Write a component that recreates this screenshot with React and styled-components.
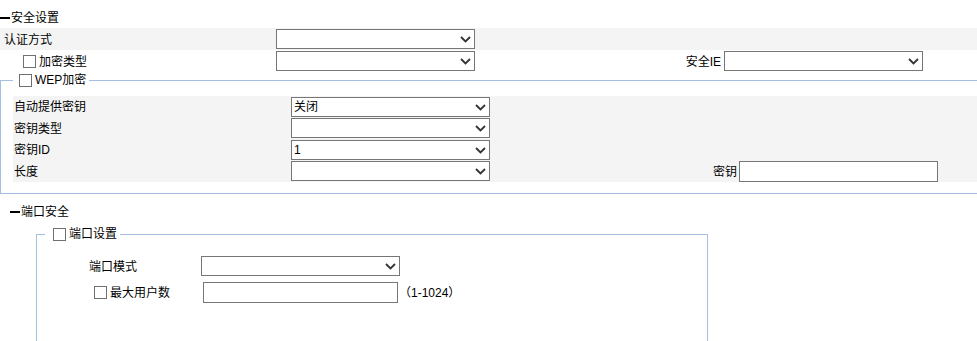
import React from "react";
import styled, { createGlobalStyle } from "styled-components";

const GlobalStyle = createGlobalStyle`
    html, body {
        margin: 0;
        padding: 0;
        background: #ffffff;
        overflow: hidden;
    }
    body {
        font-family: "Liberation Sans", "Noto Sans CJK SC", sans-serif;
        font-size: 12px;
        color: #000000;
    }
`;

const Page = styled.div`
    width: 977px;
    padding-top: 6px;
`;

const SectionTitle = styled.div`
    display: flex;
    align-items: center;
    height: 22px;
    padding-top: 1px;
    box-sizing: border-box;
    padding-left: ${(p) => p.$indent || 0}px;
    margin-top: ${(p) => p.$top || 0}px;
    line-height: 14px;
`;

const Dash = styled.span`
    display: inline-block;
    width: 10px;
    height: 2px;
    background: #000000;
    margin-right: 1px;
`;

const FormRow = styled.div`
    display: flex;
    align-items: center;
    height: ${(p) => p.$height || 22}px;
    background: ${(p) => (p.$shade ? "#f4f4f4" : "transparent")};
    line-height: 14px;
`;

const LabelCell = styled.div`
    display: flex;
    align-items: center;
    box-sizing: border-box;
    width: ${(p) => p.$width}px;
    padding-left: ${(p) => p.$pad || 0}px;
    padding-right: ${(p) => p.$padRight || 0}px;
    padding-top: 1px;
    justify-content: ${(p) => (p.$right ? "flex-end" : "flex-start")};
    white-space: nowrap;
`;

const Check = styled.input.attrs({ type: "checkbox" })`
    appearance: none;
    box-sizing: border-box;
    width: 13px;
    height: 13px;
    margin: 0 3px 0 0;
    border: 1px solid #707070;
    background: #ffffff;
`;

const SelectBox = styled.div`
    position: relative;
    width: ${(p) => p.$width || 199}px;
    height: 20px;
`;

const Select = styled.select`
    appearance: none;
    box-sizing: border-box;
    width: 100%;
    height: 100%;
    margin: 0;
    padding: 0 2px;
    border: 1px solid #767676;
    border-radius: 0;
    background: #ffffff;
    font-family: "Liberation Sans", "Noto Sans CJK SC", sans-serif;
    font-size: 12px;
    color: #000000;
    outline: none;
`;

const Chevron = styled.svg`
    position: absolute;
    right: 4px;
    top: 7px;
    width: 11px;
    height: 7px;
    pointer-events: none;
`;

const TextBox = styled.input.attrs({ type: "text" })`
    box-sizing: border-box;
    width: ${(p) => p.$width || 199}px;
    height: 21px;
    margin: 0;
    padding: 0 2px;
    border: 1px solid #767676;
    border-radius: 0;
    background: #ffffff;
    font-size: 12px;
    outline: none;
`;

const Group = styled.fieldset`
    box-sizing: border-box;
    margin: ${(p) => p.$margin || "0"};
    width: ${(p) => p.$width || "auto"};
    padding: ${(p) => p.$padding};
    border: 1px solid #a5bfe3;
    border-right: ${(p) => (p.$openRight ? "none" : "1px solid #a5bfe3")};
    min-width: 0;
`;

const Legend = styled.legend`
    display: flex;
    align-items: center;
    height: 14px;
    padding: 0 3px 0 ${(p) => p.$pad || 6}px;
    line-height: 14px;
`;

const Panel = styled.div`
    background: #f4f4f4;
`;

const Stack = styled.div`
    display: flex;
    flex-direction: column;
    gap: 4px;
`;

const Hint = styled.span`
    margin-left: 1px;
    padding-top: 1px;
    white-space: nowrap;
`;

function Dropdown({ value, width }) {
    return (
        <SelectBox $width={width}>
            <Select defaultValue={value || ""}>
                <option value={value || ""}>{value || ""}</option>
            </Select>
            <Chevron viewBox="0 0 11 7">
                <path d="M1 1 L5.5 5.5 L10 1" fill="none" stroke="#333333" strokeWidth="1.8" />
            </Chevron>
        </SelectBox>
    );
}

function App() {
    const wepRows = [
        { label: "自动提供密钥", value: "关闭" },
        { label: "密钥类型", value: "" },
        { label: "密钥ID", value: "1" },
    ];

    return (
        <Page>
            <GlobalStyle />
            <SectionTitle>
                <Dash />安全设置
            </SectionTitle>

            <FormRow $shade>
                <LabelCell $width={276} $pad={4}>认证方式</LabelCell>
                <Dropdown />
            </FormRow>
            <FormRow>
                <LabelCell $width={276} $pad={23}>
                    <Check />加密类型
                </LabelCell>
                <Dropdown />
                <LabelCell $width={249} $right $padRight={3}>安全IE</LabelCell>
                <Dropdown />
            </FormRow>

            <Group $margin="1px 0 0 0" $padding="9px 0 11px 12px" $openRight>
                <Legend $pad={6}>
                    <Check />WEP加密
                </Legend>
                <Panel>
                    {wepRows.map((row) => (
                        <FormRow key={row.label} $height={21.5}>
                            <LabelCell $width={278} $pad={1}>{row.label}</LabelCell>
                            <Dropdown value={row.value} />
                        </FormRow>
                    ))}
                    <FormRow $height={21.5}>
                        <LabelCell $width={278} $pad={1}>长度</LabelCell>
                        <Dropdown />
                        <LabelCell $width={249} $right $padRight={2}>密钥</LabelCell>
                        <TextBox />
                    </FormRow>
                </Panel>
            </Group>

            <SectionTitle $indent={10} $top={6}>
                <Dash />端口安全
            </SectionTitle>

            <Group $margin="5px 0 0 36px" $width="672px" $padding="14px 0 60px 8px">
                <Legend $pad={8}>
                    <Check />端口设置
                </Legend>
                <Stack>
                    <FormRow>
                        <LabelCell $width={156} $pad={44}>端口模式</LabelCell>
                        <Dropdown />
                    </FormRow>
                    <FormRow>
                        <LabelCell $width={158} $pad={49}>
                            <Check />最大用户数
                        </LabelCell>
                        <TextBox $width={195} />
                        <Hint>（1-1024）</Hint>
                    </FormRow>
                </Stack>
            </Group>
        </Page>
    );
}

export default App;
